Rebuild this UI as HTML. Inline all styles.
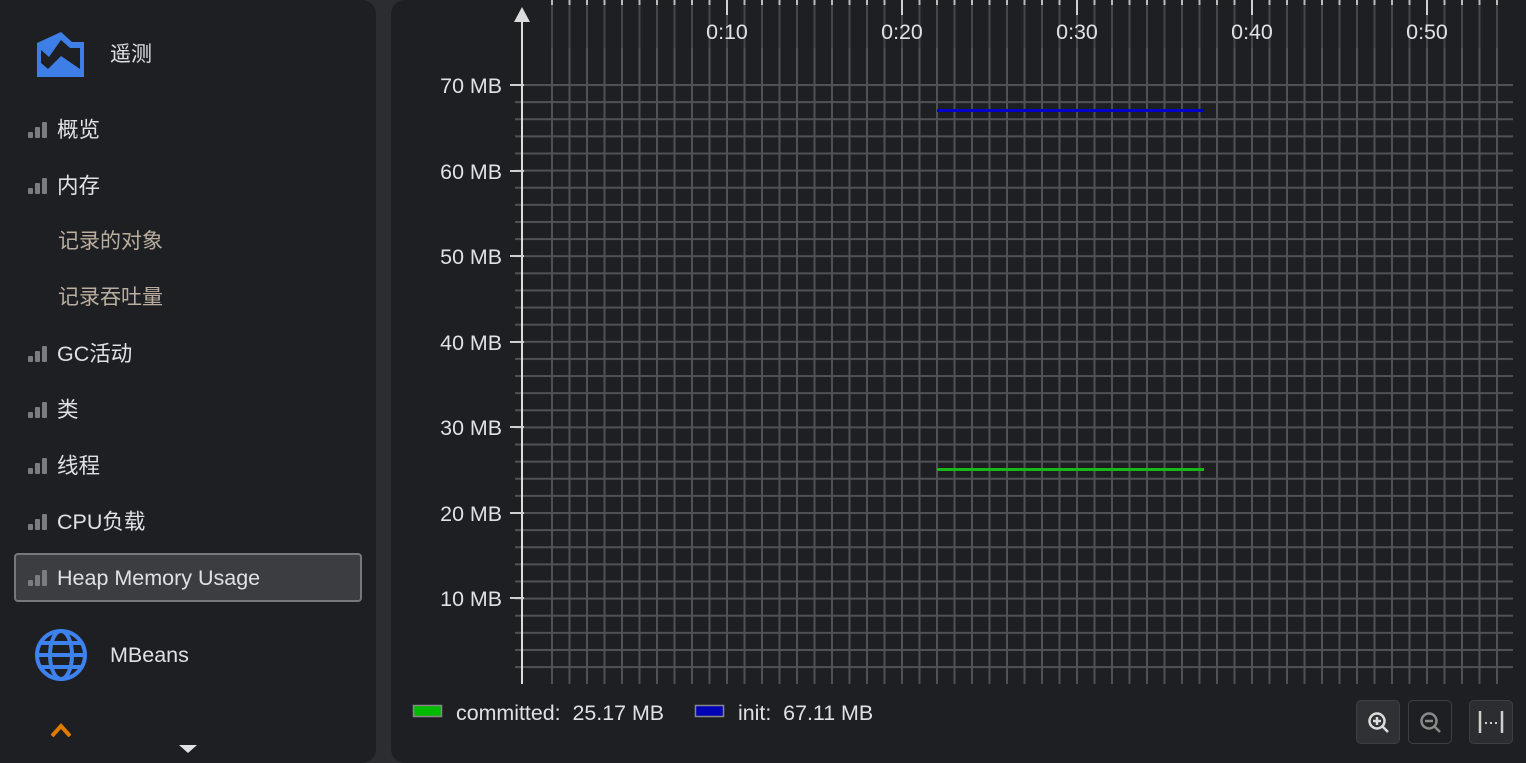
<!DOCTYPE html>
<html><head><meta charset="utf-8"><style>
html,body{margin:0;padding:0;width:1526px;height:763px;overflow:hidden;background:#2b2d30;font-family:"Liberation Sans","Noto Sans CJK SC",sans-serif;}
.left{position:absolute;left:0;top:0;width:376px;height:763px;background:#1e1f22;border-radius:0 14px 14px 0;}
.right{position:absolute;left:391px;top:0;width:1135px;height:763px;background:#1e1f22;border-radius:14px 0 0 14px;}
.item{position:absolute;left:28px;font-size:21.5px;color:#dfe1e5;height:30px;line-height:30px;white-space:nowrap;}
.item .bars{display:inline-block;width:20px;height:16px;vertical-align:-1px;margin-right:9px;position:relative;}
.bars i{position:absolute;bottom:0;width:5px;background:#7b7c7f;border-radius:1px;}
.sub{position:absolute;left:58px;font-size:21px;color:#b8ad9f;line-height:30px;}
.sel{position:absolute;left:14px;top:553px;width:344px;height:45px;background:#3c3d40;border:2px solid #77787b;border-radius:4px;}
.btn{position:absolute;top:700px;width:42px;height:42px;border-radius:5px;background:#2b2d30;border:1px solid #3e3f42;}
</style></head><body>
<div class="left">
  <svg style="position:absolute;left:0;top:0" width="100" height="90"><path d="M37 43 L61 32 L72 42 L84 42 L84 77 L37 77 Z" fill="#3d7fe6"/><path d="M41 50 L49 57 L61 40 L70 48 L80 48 L80 69 L61 56 L48 69 L41 63 Z" fill="#1e1f22"/></svg>
  <div style="position:absolute;left:110px;top:40px;font-size:21px;color:#dfe1e5;line-height:30px">遥测</div>
  <div class="item" style="top:115px"><span class="bars"><i style="left:0;height:6px"></i><i style="left:7px;height:11px"></i><i style="left:14px;height:16px"></i></span>概览</div>
  <div class="item" style="top:171px"><span class="bars"><i style="left:0;height:6px"></i><i style="left:7px;height:11px"></i><i style="left:14px;height:16px"></i></span>内存</div>
  <div class="sub" style="top:227px">记录的对象</div>
  <div class="sub" style="top:283px">记录吞吐量</div>
  <div class="item" style="top:339px"><span class="bars"><i style="left:0;height:6px"></i><i style="left:7px;height:11px"></i><i style="left:14px;height:16px"></i></span>GC活动</div>
  <div class="item" style="top:395px"><span class="bars"><i style="left:0;height:6px"></i><i style="left:7px;height:11px"></i><i style="left:14px;height:16px"></i></span>类</div>
  <div class="item" style="top:451px"><span class="bars"><i style="left:0;height:6px"></i><i style="left:7px;height:11px"></i><i style="left:14px;height:16px"></i></span>线程</div>
  <div class="item" style="top:507px"><span class="bars"><i style="left:0;height:6px"></i><i style="left:7px;height:11px"></i><i style="left:14px;height:16px"></i></span>CPU负载</div>
  <div class="sel"></div>
  <div class="item" style="top:563px"><span class="bars"><i style="left:0;height:6px"></i><i style="left:7px;height:11px"></i><i style="left:14px;height:16px"></i></span>Heap Memory Usage</div>
  <svg style="position:absolute;left:34px;top:628px" width="54" height="54" viewBox="0 0 54 54"><g fill="none" stroke="#3d82ef" stroke-width="4"><circle cx="27" cy="27" r="24"/><ellipse cx="27" cy="27" rx="11" ry="24"/><line x1="3" y1="27" x2="51" y2="27"/><path d="M7 15 H47 M7 39 H47"/></g></svg>
  <div style="position:absolute;left:110px;top:640px;font-size:21.5px;color:#dfe1e5;line-height:30px">MBeans</div>
  <svg style="position:absolute;left:51px;top:723px" width="20" height="14"><path d="M1 13 L10 3 L19 13" fill="none" stroke="#e07b00" stroke-width="4"/></svg>
  <svg style="position:absolute;left:179px;top:745px" width="18" height="9"><path d="M0 0 H18 L9 8 Z" fill="#dfe1e5"/></svg>
</div>
<div class="right"></div>
<svg style="position:absolute;left:0;top:0" width="1526" height="763">
  <defs>
    <pattern id="v" x="551" y="0" width="17.5" height="10" patternUnits="userSpaceOnUse"><rect x="0" y="0" width="2" height="10" fill="#505154"/></pattern>
    <pattern id="vt" x="551" y="0" width="17.5" height="48" patternUnits="userSpaceOnUse"><rect x="0" y="0" width="2" height="48" fill="#45464a"/><rect x="0" y="0" width="2" height="5" fill="#bbbbbb"/></pattern>
    <pattern id="h" x="0" y="84" width="10" height="17.12" patternUnits="userSpaceOnUse"><rect x="0" y="0" width="10" height="2" fill="#505154"/></pattern>
  </defs>
  <rect x="551" y="0" width="962" height="48" fill="url(#vt)"/>
  <rect x="551" y="48" width="962" height="636" fill="url(#v)"/>
  <rect x="551" y="84" width="962" height="585" fill="url(#h)"/>
  <rect x="515" y="84" width="36" height="585" fill="url(#h)"/>
  <rect x="521" y="18" width="2" height="666" fill="#dcdcdc"/>
  <path d="M514 22 L522 7 L530 22 Z" fill="#dcdcdc"/>
  <g fill="#cfcfcf"><rect x="510" y="84" width="14" height="2"/><rect x="510" y="170" width="14" height="2"/><rect x="510" y="255" width="14" height="2"/><rect x="510" y="341" width="14" height="2"/><rect x="510" y="426" width="14" height="2"/><rect x="510" y="512" width="14" height="2"/><rect x="510" y="597" width="14" height="2"/>
  <rect x="726" y="0" width="2" height="15"/><rect x="901" y="0" width="2" height="15"/><rect x="1076" y="0" width="2" height="15"/><rect x="1251" y="0" width="2" height="15"/><rect x="1426" y="0" width="2" height="15"/></g>
  <g font-family="Liberation Sans, sans-serif" font-size="21.4" fill="#dfe1e5">
    <g text-anchor="end"><text x="502" y="93">70 MB</text><text x="502" y="179">60 MB</text><text x="502" y="264">50 MB</text><text x="502" y="350">40 MB</text><text x="502" y="435">30 MB</text><text x="502" y="521">20 MB</text><text x="502" y="606">10 MB</text></g>
    <g text-anchor="middle"><text x="727" y="39">0:10</text><text x="902" y="39">0:20</text><text x="1077" y="39">0:30</text><text x="1252" y="39">0:40</text><text x="1427" y="39">0:50</text></g>
    <text x="456" y="720" xml:space="preserve" style="white-space:pre">committed:  25.17 MB</text>
    <text x="738" y="720" xml:space="preserve" style="white-space:pre">init:  67.11 MB</text>
  </g>
  <rect x="937" y="109" width="267" height="3" fill="#0000c8"/>
  <rect x="937" y="468" width="267" height="3" fill="#18b818"/>
  <rect x="413.5" y="705.5" width="28" height="11" fill="#00bb00" stroke="#888" stroke-width="1.5"/>
  <rect x="695.5" y="705.5" width="28" height="11" fill="#0000b4" stroke="#888" stroke-width="1.5"/>
</svg>
<div class="btn" style="left:1356px;background:#303134"><svg width="42" height="42"><circle cx="20" cy="20" r="7.5" fill="none" stroke="#dcdcdc" stroke-width="2.5"/><path d="M16 20 H24 M20 16 V24 M25.5 25.5 L31 31" stroke="#dcdcdc" stroke-width="2.5"/></svg></div>
<div class="btn" style="left:1408px;background:#1e1f22"><svg width="42" height="42"><circle cx="20" cy="20" r="7.5" fill="none" stroke="#8a8a8a" stroke-width="2.5"/><path d="M16 20 H24 M25.5 25.5 L31 31" stroke="#8a8a8a" stroke-width="2.5"/></svg></div>
<div class="btn" style="left:1469px"><svg width="42" height="42"><path d="M10 10 V32 M32 10 V32" stroke="#cfcfcf" stroke-width="2.5"/><path d="M15 22 H17 M20 22 H22 M25 22 H27" stroke="#cfcfcf" stroke-width="2"/></svg></div>
</body></html>
